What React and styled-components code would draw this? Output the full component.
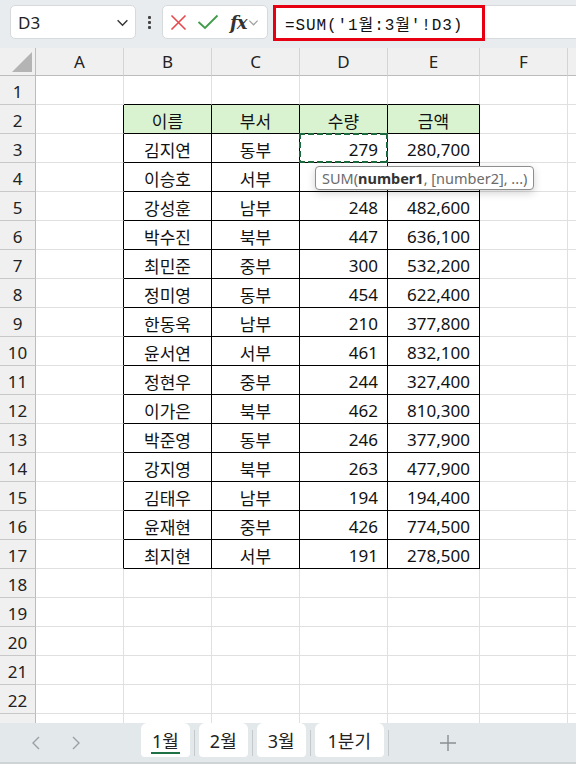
import React from "react";
import styled, { createGlobalStyle } from "styled-components";

const GlobalStyle = createGlobalStyle`
	html, body {
		margin: 0;
		padding: 0;
		background: #ffffff;
	}
	body {
		font-family: "Noto Sans", "Noto Sans CJK KR", sans-serif;
		color: #111;
	}
`;

const COLS = [
	{ key: "A", width: 88 },
	{ key: "B", width: 88 },
	{ key: "C", width: 88 },
	{ key: "D", width: 88 },
	{ key: "E", width: 92 },
	{ key: "F", width: 88 },
	{ key: "", width: 88 },
];

const HEAD = ["이름", "부서", "수량", "금액"];

// row 4 amounts sit under the function tooltip
const DATA = [
	["김지연", "동부", "279", "280,700"],
	["이승호", "서부", "", ""],
	["강성훈", "남부", "248", "482,600"],
	["박수진", "북부", "447", "636,100"],
	["최민준", "중부", "300", "532,200"],
	["정미영", "동부", "454", "622,400"],
	["한동욱", "남부", "210", "377,800"],
	["윤서연", "서부", "461", "832,100"],
	["정현우", "중부", "244", "327,400"],
	["이가은", "북부", "462", "810,300"],
	["박준영", "동부", "246", "377,900"],
	["강지영", "북부", "263", "477,900"],
	["김태우", "남부", "194", "194,400"],
	["윤재현", "중부", "426", "774,500"],
	["최지현", "서부", "191", "278,500"],
];

const TABS = ["1월", "2월", "3월", "1분기"];

const Page = styled.div`
	width: 576px;
	height: 764px;
	display: flex;
	flex-direction: column;
	overflow: hidden;
`;

const Toolbar = styled.div`
	height: 48px;
	flex: none;
	background: #e8ecef;
	display: flex;
	align-items: flex-start;
	padding: 5px 0 0 10px;
	box-sizing: border-box;
`;

const NameBox = styled.div`
	width: 126px;
	height: 34px;
	box-sizing: border-box;
	background: #fff;
	border: 1px solid #d6dadd;
	border-radius: 5px;
	display: flex;
	align-items: center;
	justify-content: space-between;
	padding: 0 6px 0 7px;
	font-size: 17px;
	color: #222;
`;

const Dots = styled.div`
	width: 26px;
	height: 34px;
	display: flex;
	flex-direction: column;
	align-items: center;
	justify-content: center;
	gap: 2px;
	span {
		width: 3px;
		height: 3px;
		background: #444;
		border-radius: 1px;
	}
`;

const FxBox = styled.div`
	width: 106px;
	height: 34px;
	box-sizing: border-box;
	background: #fff;
	border: 1px solid #d6dadd;
	border-radius: 5px;
	display: flex;
	align-items: center;
	padding-left: 7px;
	gap: 10px;
`;

const FxText = styled.span`
	font-family: "DejaVu Serif", "Liberation Serif", serif;
	font-style: italic;
	font-weight: bold;
	font-size: 18px;
	color: #333;
	margin-left: 1px;
	letter-spacing: -1px;
`;

const FormulaWrap = styled.div`
	flex: 1;
	height: 34px;
	margin-left: 5px;
	background: #fff;
	border-top: 1px solid #d6dadd;
	border-bottom: 1px solid #d6dadd;
	box-sizing: border-box;
	display: flex;
	align-items: stretch;
`;

const Highlight = styled.div`
	width: 212px;
	height: 36px;
	margin-top: -1px;
	box-sizing: border-box;
	border: 3px solid #e60012;
	display: flex;
	align-items: center;
	padding-left: 9px;
	font-family: "Liberation Mono", "Noto Sans CJK KR", monospace;
	font-size: 16px;
	letter-spacing: 0.9px;
	color: #111;
	white-space: nowrap;
`;

const Sheet = styled.div`
	flex: 1;
	position: relative;
	overflow: hidden;
	display: grid;
	grid-template-columns: 36px ${COLS.map((c) => c.width + "px").join(" ")};
	grid-template-rows: 28px;
	grid-auto-rows: 29px;
	align-content: start;
`;

const Cell = styled.div`
	box-sizing: border-box;
	border-right: 1px solid ${({ $r }) => $r || "#e0e0e0"};
	border-bottom: 1px solid ${({ $b }) => $b || "#e0e0e0"};
	background: ${({ $fill }) => $fill || "#fff"};
	display: flex;
	align-items: center;
	justify-content: ${({ $align }) => $align || "center"};
	padding: 2px ${({ $align }) => ($align === "flex-end" ? "9px" : "0")} 0 0;
	font-size: 17px;
	color: #111;
	white-space: nowrap;
	position: relative;
`;

const HeaderCell = styled.div`
	box-sizing: border-box;
	background: #f0f0f0;
	border-right: 1px solid ${({ $corner }) => ($corner ? "#bcbcbc" : "#d4d4d4")};
	border-bottom: 1px solid #bcbcbc;
	display: flex;
	align-items: center;
	justify-content: center;
	font-size: 17px;
	color: #222;
	position: relative;
`;

const RowHead = styled(HeaderCell)`
	border-right: 1px solid #bcbcbc;
	border-bottom: 1px solid #c8c8c8;
	padding-top: 2px;
`;

const Corner = styled.div`
	position: absolute;
	right: 3px;
	bottom: 3px;
	width: 0;
	height: 0;
	border-left: 20px solid transparent;
	border-bottom: 20px solid #b4b4b4;
`;

const dashH = "repeating-linear-gradient(90deg, #1b6a3e 0 6px, transparent 6px 9px)";
const dashV = "repeating-linear-gradient(180deg, #1b6a3e 0 6px, transparent 6px 9px)";

const Marquee = styled.div`
	position: absolute;
	left: -1px;
	top: -1px;
	right: -1px;
	bottom: -1px;
	background:
		${dashH} left top / 100% 2px no-repeat,
		${dashH} left bottom / 100% 2px no-repeat,
		${dashV} left top / 2px 100% no-repeat,
		${dashV} right top / 2px 100% no-repeat;
	pointer-events: none;
`;

const Tip = styled.div`
	position: absolute;
	left: 315px;
	top: 118px;
	height: 24px;
	box-sizing: border-box;
	padding: 0 6px;
	background: #fff;
	border: 1px solid #8e8e8e;
	border-radius: 4px;
	box-shadow: 0 3px 8px rgba(0, 0, 0, 0.18);
	display: flex;
	align-items: center;
	font-size: 14.5px;
	color: #6b6b6b;
	white-space: nowrap;
	b {
		color: #333;
		font-weight: 700;
	}
`;

const TabBar = styled.div`
	height: 41px;
	flex: none;
	background: #e3e8eb;
	border-bottom: 2px solid #cfd4d7;
	box-sizing: border-box;
	display: flex;
	align-items: flex-end;
`;

const Nav = styled.div`
	width: 141px;
	height: 39px;
	display: flex;
	align-items: center;
	padding-left: 30px;
	gap: 28px;
	box-sizing: border-box;
`;

const Tab = styled.div`
	height: 34px;
	box-sizing: border-box;
	padding: 0 ${({ $wide }) => ($wide ? "13px" : "11px")};
	background: #fff;
	border-radius: 6px 6px 4px 4px;
	display: flex;
	align-items: center;
	justify-content: center;
	font-size: 18px;
	color: #222;
	position: relative;
	margin-bottom: 5px;
	&::after {
		content: "";
		display: ${({ $active }) => ($active ? "block" : "none")};
		position: absolute;
		left: 10px;
		right: 10px;
		bottom: 3px;
		height: 2px;
		background: #1e7145;
	}
`;

const Sep = styled.div`
	width: 1px;
	height: 26px;
	background: #c5c9cc;
	margin: 0 4px 6px;
`;

const Plus = styled.div`
	flex: 1;
	height: 39px;
	display: flex;
	align-items: center;
	justify-content: center;
	margin-right: 74px;
`;

const Chevron = ({ size = 12, color = "#333" }) => (
	<svg width={size} height={size} viewBox="0 0 12 12">
		<path d="M1.5 4 L6 8.5 L10.5 4" fill="none" stroke={color} strokeWidth="1.3" />
	</svg>
);

const cellFor = (row, col) => {
	// col: 0..6 for A..G, row: 1-based
	const inTable = row >= 2 && row <= 17 && col >= 1 && col <= 4;
	let right;
	let bottom;
	if (inTable || (col === 0 && row >= 2 && row <= 17)) right = "#000";
	if (inTable || (row === 1 && col >= 1 && col <= 4)) bottom = "#000";
	let text = "";
	let align = "center";
	let fill;
	if (row === 2 && inTable) {
		text = HEAD[col - 1];
		fill = "#d9f2d0";
	} else if (inTable) {
		text = DATA[row - 3][col - 1];
		if (col >= 3) align = "flex-end";
	}
	return { right, bottom, text, align, fill };
};

export default function App() {
	const rows = Array.from({ length: 23 }, (_, i) => i + 1);
	return (
		<Page>
			<GlobalStyle />
			<Toolbar>
				<NameBox>
					<span>D3</span>
					<Chevron size={13} color="#333" />
				</NameBox>
				<Dots>
					<span />
					<span />
					<span />
				</Dots>
				<FxBox>
					<svg width="17" height="17" viewBox="0 0 17 17">
						<path d="M1.5 1.5 L15.5 15.5 M15.5 1.5 L1.5 15.5" stroke="#e5484d" strokeWidth="1.6" fill="none" />
					</svg>
					<svg width="22" height="16" viewBox="0 0 22 16">
						<path d="M1.5 8 L8 14 L20.5 1.5" stroke="#3f9c47" strokeWidth="1.8" fill="none" />
					</svg>
					<FxText>fx</FxText>
					<span style={{ marginLeft: -8 }}>
						<Chevron size={11} color="#a0a0a0" />
					</span>
				</FxBox>
				<FormulaWrap>
					<Highlight>=SUM('1월:3월'!D3)</Highlight>
				</FormulaWrap>
			</Toolbar>

			<Sheet>
				<HeaderCell $corner>
					<Corner />
				</HeaderCell>
				{COLS.map((c, i) => (
					<HeaderCell key={i}>{c.key}</HeaderCell>
				))}
				{rows.map((r) => (
					<React.Fragment key={r}>
						<RowHead>{r}</RowHead>
						{COLS.map((c, ci) => {
							const info = cellFor(r, ci);
							return (
								<Cell
									key={ci}
									$r={info.right}
									$b={info.bottom}
									$fill={info.fill}
									$align={info.align}
								>
									{info.text}
									{r === 3 && ci === 3 && <Marquee />}
								</Cell>
							);
						})}
					</React.Fragment>
				))}
				<Tip>
					SUM(<b>number1</b>, [number2], ...)
				</Tip>
			</Sheet>

			<TabBar>
				<Nav>
					<svg width="12" height="16" viewBox="0 0 12 16">
						<path d="M9 2 L3 8 L9 14" stroke="#9aa0a4" strokeWidth="1.4" fill="none" />
					</svg>
					<svg width="12" height="16" viewBox="0 0 12 16">
						<path d="M3 2 L9 8 L3 14" stroke="#9aa0a4" strokeWidth="1.4" fill="none" />
					</svg>
				</Nav>
				{TABS.map((t, i) => (
					<React.Fragment key={t}>
						<Tab $active={i === 0} $wide={i === 3}>
							{t}
						</Tab>
						<Sep />
					</React.Fragment>
				))}
				<Plus>
					<svg width="18" height="18" viewBox="0 0 18 18">
						<path d="M9 1 V17 M1 9 H17" stroke="#8a8f93" strokeWidth="1.4" fill="none" />
					</svg>
				</Plus>
			</TabBar>
		</Page>
	);
}
